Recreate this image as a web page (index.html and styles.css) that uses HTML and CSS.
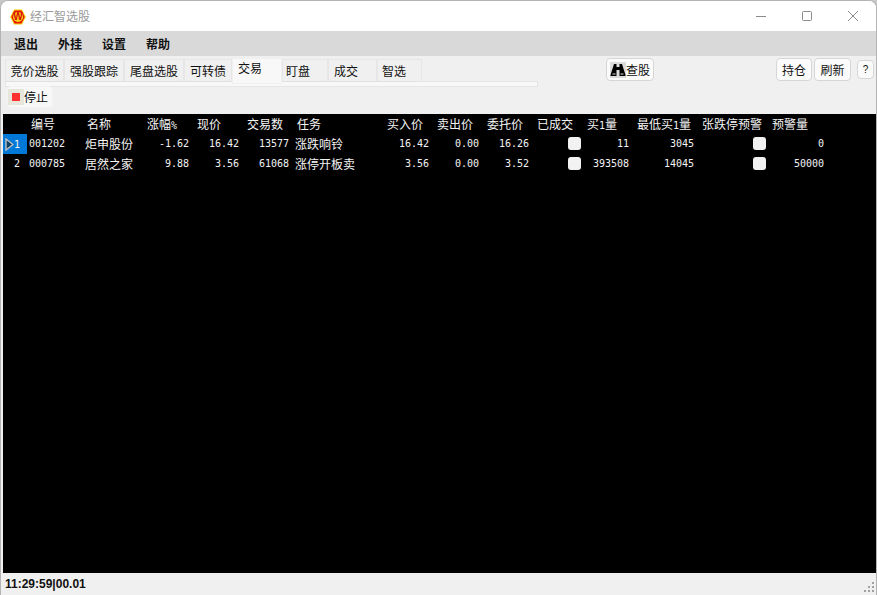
FILE: index.html
```html
<!DOCTYPE html>
<html lang="zh">
<head>
<meta charset="utf-8">
<title>经汇智选股</title>
<link rel="stylesheet" href="styles.css">
</head>
<body>
<div class="window">
  <header class="titlebar">
    <svg class="logo" viewBox="0 0 16 16" width="16" height="16">
      <polygon points="4,0.5 12,0.5 15.8,8 12,15.5 4,15.5 0.2,8" fill="#f7d000"/>
      <polygon points="4.6,1.5 11.4,1.5 14.7,8 11.4,14.5 4.6,14.5 1.3,8" fill="#e8140c"/>
      <circle cx="8" cy="8" r="5" fill="#fbd40e"/>
      <text x="8" y="11.4" class="logo-w">W</text>
    </svg>
    <span class="title">经汇智选股</span>
    <div class="winctl">
      <svg width="12" height="12" viewBox="0 0 12 12"><path d="M1 6.5H11" stroke="#8a8a8a" fill="none"/></svg>
      <svg width="12" height="12" viewBox="0 0 12 12"><rect x="1.5" y="1.5" width="9" height="9" rx="1" stroke="#8a8a8a" fill="none"/></svg>
      <svg width="12" height="12" viewBox="0 0 12 12"><path d="M1 1L11 11M11 1L1 11" stroke="#8a8a8a" fill="none"/></svg>
    </div>
  </header>
  <nav class="menubar">
    <span>退出</span><span>外挂</span><span>设置</span><span>帮助</span>
  </nav>
  <section class="toolbar">
    <div class="toolrow">
      <div class="tabs">
        <span class="tab w59">竞价选股</span>
        <span class="tab w60">强股跟踪</span>
        <span class="tab w60">尾盘选股</span>
        <span class="tab w48">可转债</span>
        <span class="tab w50 active">交易</span>
        <span class="tab w46">盯盘</span>
        <span class="tab w49">成交</span>
        <span class="tab w45">智选</span>
      </div>
      <button class="btn search">
        <svg class="bino" width="16" height="16" viewBox="0 0 16 16">
          <path d="M4 2h2.5v3h3V2H12l3.5 11v1h-6V8h-3v6h-6v-1z" fill="#000"/>
          <path d="M2.5 12h3M10.5 12h3" stroke="#ddd" fill="none"/>
        </svg>查股
      </button>
      <div class="actions">
        <button class="btn act">持仓</button>
        <button class="btn act">刷新</button>
        <button class="btn help">?</button>
      </div>
    </div>
    <div class="strip"></div>
    <button class="btn stop"><span class="stop-icon"><i></i></span>停止</button>
  </section>
  <main class="grid">
    <table>
      <colgroup>
        <col class="c24"><col class="c56"><col class="c58"><col class="c50"><col class="c50"><col class="c50"><col class="c90"><col class="c50"><col class="c50"><col class="c50"><col class="c50"><col class="c50"><col class="c65"><col class="c70"><col class="c60"><col>
      </colgroup>
      <thead>
        <tr>
          <th></th><th class="narrow">编号</th><th class="narrow">名称</th><th>涨幅<span class="ascii">%</span></th><th>现价</th><th>交易数</th><th>任务</th><th>买入价</th><th>卖出价</th><th>委托价</th><th>已成交</th><th>买<span class="ascii">1</span>量</th><th>最低买<span class="ascii">1</span>量</th><th>张跌停预警</th><th>预警量</th><th></th>
        </tr>
      </thead>
      <tbody>
        <tr>
          <td class="idx selected"><svg class="marker" width="9" height="13" viewBox="0 0 9 13"><path d="M1 1L8 6.5L1 12Z" fill="#123f66" stroke="#c0c0c0" stroke-width="1.4"/></svg>1</td>
          <td class="mono left">001202</td><td class="left">炬申股份</td>
          <td class="mono">-1.62</td><td class="mono">16.42</td><td class="mono">13577</td>
          <td class="left task">涨跌响铃</td>
          <td class="mono">16.42</td><td class="mono">0.00</td><td class="mono">16.26</td>
          <td class="chk"><span class="box"></span></td>
          <td class="mono">11</td><td class="mono">3045</td>
          <td class="chk"><span class="box"></span></td>
          <td class="mono">0</td><td></td>
        </tr>
        <tr>
          <td class="idx">2</td>
          <td class="mono left">000785</td><td class="left">居然之家</td>
          <td class="mono">9.88</td><td class="mono">3.56</td><td class="mono">61068</td>
          <td class="left task">涨停开板卖</td>
          <td class="mono">3.56</td><td class="mono">0.00</td><td class="mono">3.52</td>
          <td class="chk"><span class="box"></span></td>
          <td class="mono">393508</td><td class="mono">14045</td>
          <td class="chk"><span class="box"></span></td>
          <td class="mono">50000</td><td></td>
        </tr>
      </tbody>
    </table>
  </main>
  <footer class="statusbar">
    <span class="clock">11:29:59|00.01</span>
    <svg class="grip" width="12" height="12" viewBox="0 0 12 12"><path d="M8 1h2v2H8zM4 5h2v2H4zM8 5h2v2H8zM0 9h2v2H0zM4 9h2v2H4zM8 9h2v2H8z" fill="#a0a0a0"/></svg>
  </footer>
</div>
</body>
</html>
```
FILE: styles.css
```css
* { box-sizing: border-box; }
html, body { margin: 0; height: 100%; background: #c8c8c8; overflow: hidden; }
body { font: 12px/1 "Noto Sans CJK SC", "Liberation Sans", sans-serif; color: #000; }

.window {
  width: 877px;
  height: 595px;
  display: flex;
  flex-direction: column;
  background: #f0f0f0;
  border: 1px solid #b4b4b4;
  border-bottom: 0;
  border-radius: 8px 8px 0 0;
  overflow: hidden;
}

.titlebar {
  height: 30px;
  flex: none;
  background: #fff;
  display: flex;
  align-items: center;
  padding: 0 0 0 9px;
}
.logo { flex: none; margin-right: 4px; margin-top: 1px; }
.logo-w { font: 900 10px "Liberation Sans", sans-serif; fill: #d8100c; text-anchor: middle; }
.title { color: #9a9a9a; font-size: 12px; }
.winctl { margin-left: auto; display: flex; gap: 34px; padding-right: 17px; }

.menubar {
  height: 25px;
  flex: none;
  background: #d9d9d9;
  display: flex;
  align-items: center;
  gap: 20px;
  padding-left: 13px;
  font-weight: 700;
  color: #111;
}

.toolbar { height: 58px; flex: none; background: #f0f0f0; }
.toolrow { display: flex; padding: 3px 0 0 4px; height: 26px; }
.tabs { display: flex; height: 23px; }
.tab {
  display: flex;
  align-items: center;
  justify-content: center;
  background: #f0f0f0;
  border: 1px solid #e6e6e6;
  border-bottom: 1px solid #e0e0e0;
  color: #111;
}
.w59 { width: 59px; }
.w60 { width: 60px; }
.w48 { width: 48px; }
.w50 { width: 50px; }
.w46 { width: 46px; justify-content: flex-start; padding-left: 3px; }
.w49 { width: 49px; justify-content: flex-start; padding-left: 5px; }
.w45 { width: 45px; justify-content: flex-start; padding-left: 4px; }
.tab.active {
  background: #f8f8f8;
  height: 26px;
  margin-top: -1px;
  border-color: #f0f0f0;
  justify-content: flex-start;
  padding: 0 0 6px 5px;
}

.strip {
  width: 533px;
  height: 6px;
  margin: -1px 0 0 4px;
  background: #f8f8f8;
  border: 1px solid #e6e6e6;
}

.btn {
  font: inherit;
  color: #111;
  background: #fbfbfb;
  border: 1px solid #d6d6d6;
  border-radius: 4px;
  padding: 0;
  display: flex;
  align-items: center;
  justify-content: center;
}
.search { width: 48px; height: 23px; margin: -1px 0 0 184px; }
.bino { flex: none; background: #dcdcdc; }
.actions { margin-left: auto; display: flex; gap: 2px; padding-right: 2px; margin-top: -1px; }
.act { width: 36px; height: 23px; }
.act + .act { width: 37px; }
.help { width: 17px; height: 19px; margin: 2px 0 0 4px; font-size: 10px; font-family: "Liberation Sans", sans-serif; }
.stop {
  width: 46px;
  height: 22px;
  margin: -1px 0 0 6px;
  background: #f8f8f8;
  border: 1px solid #f2f2f2;
  justify-content: flex-start;
}
.stop-icon {
  width: 16px;
  height: 16px;
  background: #e6e6da;
  display: flex;
  align-items: center;
  justify-content: center;
}
.stop-icon i { display: block; width: 8px; height: 8px; background: #ff3030; }

.grid { flex: 1; min-height: 0; background: #000; margin-left: 2px; }
table { border-collapse: collapse; table-layout: fixed; width: 100%; color: #f4f4f4; }
.c24 { width: 24px; } .c56 { width: 56px; } .c58 { width: 58px; }
.c50 { width: 50px; } .c90 { width: 90px; } .c65 { width: 65px; }
.c70 { width: 70px; } .c60 { width: 60px; }
th, td { height: 20px; padding: 0; font-weight: 400; white-space: nowrap; overflow: visible; }
th { text-align: left; padding-left: 6px; }
th.narrow { padding-left: 4px; }
.ascii { font-family: "DejaVu Sans Mono", monospace; font-size: 10px; }
td { text-align: right; padding-right: 2px; }
td.left { text-align: left; padding-left: 2px; }
td.task { padding-left: 4px; }
.mono, .idx { font-family: "DejaVu Sans Mono", monospace; font-size: 10px; }
.mono { position: relative; top: 0; }
.idx { text-align: right; padding-right: 7px; }
.selected { background: #0078d7; }
.marker { vertical-align: -3px; }
.chk { padding-right: 0; padding-bottom: 2px; }
.box { display: inline-block; width: 13px; height: 13px; background: #f2f2f2; border-radius: 3px; vertical-align: middle; }

.statusbar {
  height: 22px;
  flex: none;
  background: #f0f0f0;
  display: flex;
  align-items: center;
  justify-content: space-between;
  padding-left: 4px;
}
.clock { font: 700 12px "Liberation Sans", sans-serif; color: #111; }
.grip { align-self: flex-end; margin: 0 0 2px 0; }
```
